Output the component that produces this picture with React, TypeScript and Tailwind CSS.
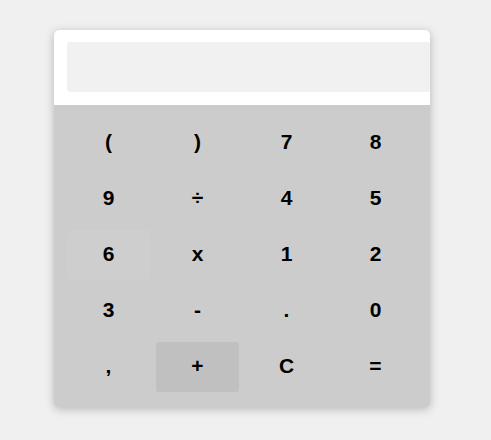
const keys = ["(", ")", "7", "8", "9", "÷", "4", "5", "6", "x", "1", "2", "3", "-", ".", "0", ",", "+", "C", "="];

export default function App() {
  return (
    <div className="min-h-[440px] bg-[#f0f0f0] pt-[30px] pl-[54px] font-['Liberation_Sans',Arial,sans-serif]">
      <div className="w-[376px] overflow-hidden rounded-[5px] bg-[#cccccc] shadow-[0_2px_10px_rgba(0,0,0,0.25)]">
        <div className="bg-white pt-3 pb-[13px] pl-[13px]">
          <div className="h-[50px] w-[363px] rounded-[3px] bg-[#f1f1f1]" />
        </div>
        <div className="grid grid-cols-4 gap-[6px] px-[13px] pt-[13px] pb-[15px]">
          {keys.map((k) => (
            <button
              key={k}
              className={`flex h-[50px] items-center justify-center rounded-[3px] pb-0.5 text-[21px] font-bold text-black ${
                k === "+" ? "bg-[#c0c0c0]" : k === "6" ? "bg-[#cecece]" : "bg-transparent"
              }`}
            >
              {k}
            </button>
          ))}
        </div>
      </div>
    </div>
  );
}
